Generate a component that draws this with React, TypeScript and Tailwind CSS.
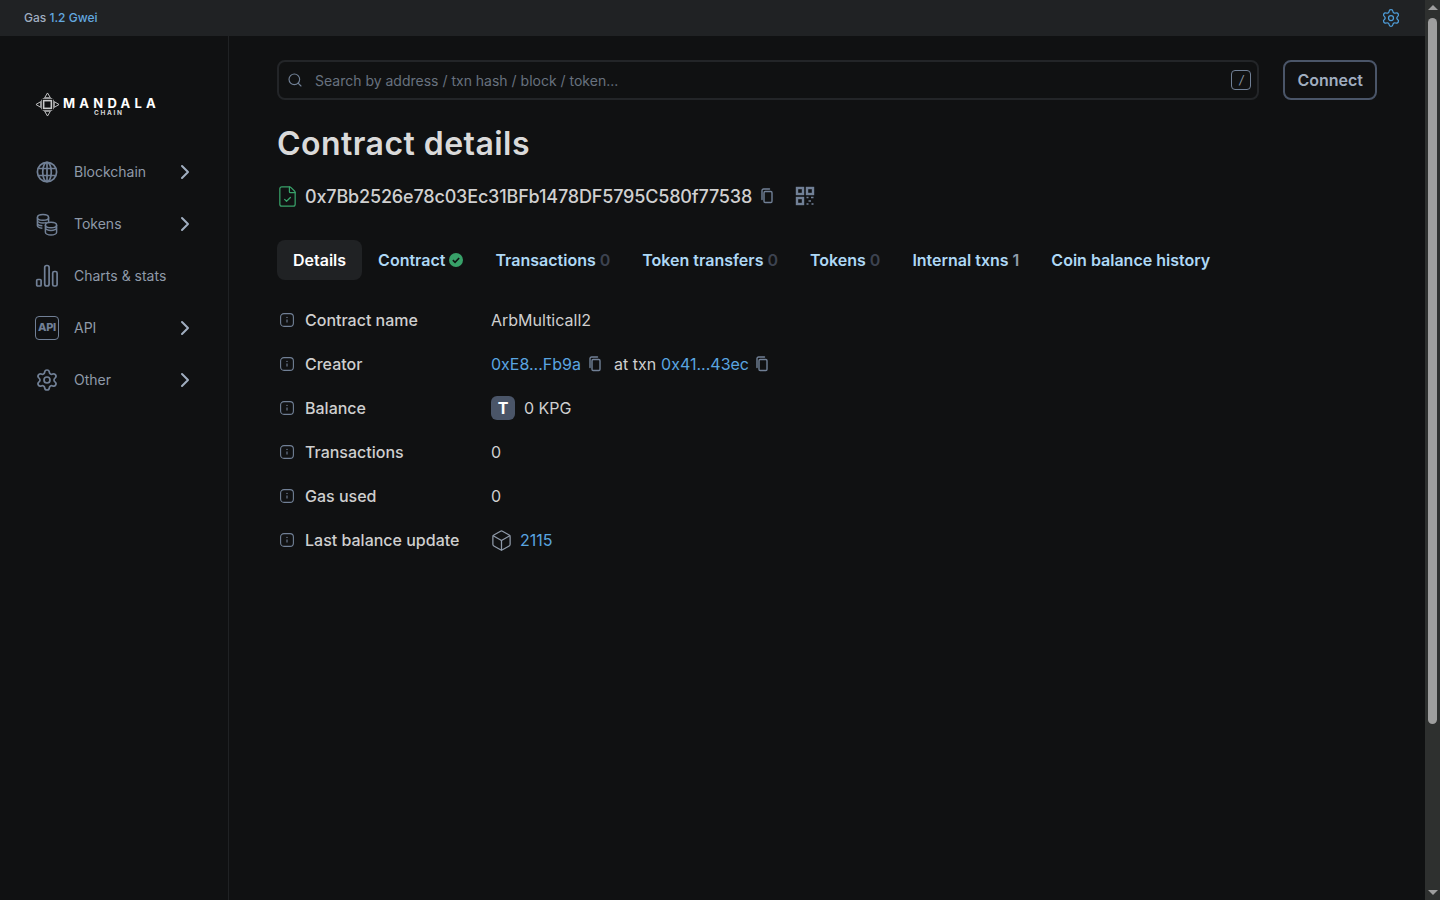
import { Box, ChevronRight, FileCheck, Search, Settings } from "lucide-react";

function CopyIcon() {
  return (
    <svg viewBox="0 0 20 20" className="h-5 w-5 shrink-0 text-[#718096]" fill="none" stroke="currentColor" strokeWidth="1.4">
      <rect x="7" y="5.5" width="8" height="11" rx="1.2" />
      <path d="M5 13.5V4.6C5 3.7 5.7 3 6.6 3H12.5" strokeLinecap="round" />
    </svg>
  );
}

function QrIcon() {
  return (
    <svg viewBox="0 0 20 20" className="h-5 w-5 text-[#718096]" fill="none" stroke="currentColor" strokeWidth="2.4">
      <rect x="2" y="2" width="6" height="6" />
      <rect x="12" y="2" width="6" height="6" />
      <rect x="2" y="12" width="6" height="6" />
      <path d="M11.5 11.5h2M16 11.5h2.5M13.5 15h2.5M11.5 18h2M16.5 18h2" strokeWidth="1.6" />
    </svg>
  );
}

function InfoIcon() {
  return (
    <svg viewBox="0 0 14 14" className="h-3.5 w-3.5 shrink-0 text-[#718096]" fill="none" stroke="currentColor">
      <rect x="0.6" y="0.6" width="12.8" height="12.8" rx="3.4" strokeWidth="1.1" />
      <path d="M7 6.4v3.2" strokeWidth="1.1" />
      <circle cx="7" cy="4.4" r="0.7" fill="currentColor" stroke="none" />
    </svg>
  );
}

function GlobeIcon() {
  return (
    <svg viewBox="0 0 24 24" className="h-6 w-6 text-[#718096]" fill="none" stroke="currentColor" strokeWidth="1.7">
      <circle cx="12" cy="12" r="9.6" />
      <ellipse cx="12" cy="12" rx="4.3" ry="9.6" />
      <path d="M12 2.4v19.2M3.4 8.5h17.2M3.4 15.5h17.2" />
    </svg>
  );
}

function CoinsIcon() {
  return (
    <svg viewBox="0 0 24 24" className="h-6 w-6 text-[#718096]" fill="none" stroke="currentColor" strokeWidth="1.5">
      <ellipse cx="8" cy="5.4" rx="5.6" ry="2.8" />
      <path d="M2.4 5.4v8.2c0 1.3 1.9 2.4 5 2.7M2.4 8.2c0 1.5 2.5 2.8 5.6 2.8 1.3 0 2.6-.2 3.6-.7M2.4 11c0 1.5 2.2 2.7 5 2.8M13.6 5.4v5" />
      <ellipse cx="16" cy="13" rx="5.6" ry="2.8" />
      <path d="M10.4 13v7.2c0 1.5 2.5 2.8 5.6 2.8s5.6-1.3 5.6-2.8V13M10.4 15.6c0 1.5 2.5 2.8 5.6 2.8s5.6-1.3 5.6-2.8" />
    </svg>
  );
}

function ChartIcon() {
  return (
    <svg viewBox="0 0 24 24" className="h-6 w-6 text-[#718096]" fill="none" stroke="currentColor" strokeWidth="1.7">
      <rect x="1.7" y="15.5" width="4.4" height="6.5" rx="1" />
      <rect x="9.7" y="1.5" width="4.4" height="20.5" rx="2" />
      <rect x="17.7" y="7.5" width="4.4" height="14.5" rx="1.6" />
    </svg>
  );
}

function Logo() {
  return (
    <div className="flex items-start">
      <svg viewBox="0 0 26 26" className="-mt-px h-[25px] w-[25px] text-[#c9cacb]" fill="none" stroke="currentColor" strokeWidth="1">
        <rect x="9" y="9" width="8" height="8" strokeWidth="1.6" />
        <path d="M13 1l3 5h-6zM13 25l3-5h-6zM1 13l5 3v-6zM25 13l-5 3v-6z" />
        <path d="M8 6.8h10M8 19.2h10M6.8 8v10M19.2 8v10" strokeWidth="0.7" />
      </svg>
      <div className="mt-[4px] ml-[3px] flex flex-col">
        <span className="text-[13px] leading-[13px] font-bold tracking-[0.325em] whitespace-nowrap text-white">MANDALA</span>
        <span className="ml-[31px] text-[6.5px] leading-[6px] font-bold tracking-[0.26em] text-[#d5d5d5]">CHAIN</span>
      </div>
    </div>
  );
}

const navItems = [
  { label: "Blockchain", icon: <GlobeIcon />, arrow: true },
  { label: "Tokens", icon: <CoinsIcon />, arrow: true },
  { label: "Charts & stats", icon: <ChartIcon />, arrow: false },
  {
    label: "API",
    icon: (
      <span className="flex h-6 w-6 items-center justify-center rounded-[4px] border-[1.5px] border-[#718096] text-[11px] font-extrabold tracking-[-0.03em] text-[#718096]">
        API
      </span>
    ),
    arrow: true,
  },
  { label: "Other", icon: <Settings className="h-6 w-6 text-[#718096]" strokeWidth={1.7} />, arrow: true },
];

const tabs = [
  { label: "Transactions", count: "0" },
  { label: "Token transfers", count: "0" },
  { label: "Tokens", count: "0" },
  { label: "Internal txns", count: "1", light: true },
  { label: "Coin balance history" },
];

function Row({ label, children }: { label: string; children: React.ReactNode }) {
  return (
    <div className="flex h-11 items-center">
      <div className="flex w-[214px] shrink-0 items-center gap-[11px] pl-[3px] font-medium text-[#cfcfcf]">
        <InfoIcon />
        <span>{label}</span>
      </div>
      <div className="flex items-center text-[#cfcfcf]">{children}</div>
    </div>
  );
}

function Scrollbar() {
  return (
    <div className="flex w-[15px] shrink-0 flex-col items-center bg-[#2e302f]">
      <div className="mt-[5px] h-0 w-0 border-x-[5px] border-b-[5px] border-x-transparent border-b-[#9e9e9e]" />
      <div className="mt-2 h-[706px] w-[9px] rounded-full bg-[#9e9e9e]" />
      <div className="mt-auto mb-[5px] h-0 w-0 border-x-[5px] border-t-[5px] border-x-transparent border-t-[#9e9e9e]" />
    </div>
  );
}

export default function App() {
  return (
    <div className="flex h-screen overflow-hidden bg-[#101112] font-['Inter',sans-serif]">
      <div className="min-w-0 flex-1">
        <div className="flex h-9 items-center justify-between bg-[#202224] pr-6 pl-6 text-xs font-medium">
          <div>
            <span className="text-[#a0aec0]">Gas </span>
            <span className="text-[#63a9e0]">1.2 Gwei</span>
          </div>
          <Settings className="h-5 w-5 text-[#4f9fdc]" strokeWidth={1.5} />
        </div>
        <div className="flex h-[864px]">
          <aside className="w-[229px] shrink-0 border-r border-[#202224] pt-[57px] pl-[35px]">
            <Logo />
            <nav className="mt-[29px] flex flex-col">
              {navItems.map((item) => (
                <div key={item.label} className="flex h-[52px] items-center text-sm text-[#8f9aa9]">
                  <span className="flex w-6 justify-center">{item.icon}</span>
                  <span className="ml-[15px] w-[100px] whitespace-nowrap">{item.label}</span>
                  {item.arrow && <ChevronRight className="ml-[-1px] h-6 w-6 text-[#a0aec0]" strokeWidth={2} />}
                </div>
              ))}
            </nav>
          </aside>
          <main className="min-w-0 flex-1 px-12 pt-6">
            <div className="flex gap-6">
              <div className="flex h-10 flex-1 items-center rounded-lg border-2 border-[#232528] pr-1.5 pl-2">
                <Search className="h-4 w-4 text-[#718096]" strokeWidth={1.7} />
                <span className="ml-3 flex-1 translate-y-px text-sm text-[#68717f]">Search by address / txn hash / block / token...</span>
                <span className="flex h-5 w-5 items-center justify-center rounded-[4px] border border-[#718096] text-xs text-[#8f9aa9] italic">/</span>
              </div>
              <button className="h-10 rounded-lg border-2 border-[#4a5568] px-3 font-semibold text-[#a0aec0]">Connect</button>
            </div>
            <h1 className="mt-[24px] h-10 text-[32px] leading-10 font-semibold tracking-[0.45px] text-[#dadada]">Contract details</h1>
            <div className="mt-[20px] flex h-6 items-center">
              <FileCheck className="-ml-px h-[23px] w-[23px] text-[#38a169]" strokeWidth={1.3} />
              <span className="ml-1.5 text-[18px] font-medium tracking-[-0.17px] text-[#d0d0d0]">0x7Bb2526e78c03Ec31BFb1478DF5795C580f77538</span>
              <span className="ml-[5px]"><CopyIcon /></span>
              <span className="ml-[18px]"><QrIcon /></span>
            </div>
            <div className="mt-[32px] flex h-10 items-center font-semibold text-[#aed8f5]">
              <div className="flex h-10 items-center rounded-lg bg-[#202224] px-4 text-white">Details</div>
              <div className="ml-4 flex items-center gap-1">
                Contract
                <svg viewBox="0 0 16 16" className="h-3.5 w-3.5">
                  <circle cx="8" cy="8" r="8" fill="#38a169" />
                  <path d="M4.4 8.2l2.5 2.5 4.7-5" fill="none" stroke="#101112" strokeWidth="1.8" />
                </svg>
              </div>
              {tabs.map((tab) => (
                <div key={tab.label} className="ml-8 flex items-center gap-1 whitespace-nowrap">
                  {tab.label}
                  {tab.count && <span className={tab.light ? "text-[#8f9aa9]" : "text-[#3d4350]"}>{tab.count}</span>}
                </div>
              ))}
            </div>
            <div className="mt-[18px]">
              <Row label="Contract name">ArbMulticall2</Row>
              <Row label="Creator">
                <span className="text-[#5aa5e0]">0xE8...Fb9a</span>
                <span className="ml-1"><CopyIcon /></span>
                <span className="ml-[9px]">at txn</span>
                <span className="ml-[5px] text-[#5aa5e0]">0x41...43ec</span>
                <span className="ml-[3px]"><CopyIcon /></span>
              </Row>
              <Row label="Balance">
                <span className="flex h-6 w-6 items-center justify-center rounded-md bg-[#4a5568] font-bold text-white">T</span>
                <span className="ml-[9px]">0 KPG</span>
              </Row>
              <Row label="Transactions">0</Row>
              <Row label="Gas used">0</Row>
              <Row label="Last balance update">
                <Box className="-ml-px h-[23px] w-[23px] text-[#8f9aa9]" strokeWidth={1.3} />
                <span className="ml-[7px] text-[#5aa5e0]">2115</span>
              </Row>
            </div>
          </main>
        </div>
      </div>
      <Scrollbar />
    </div>
  );
}
